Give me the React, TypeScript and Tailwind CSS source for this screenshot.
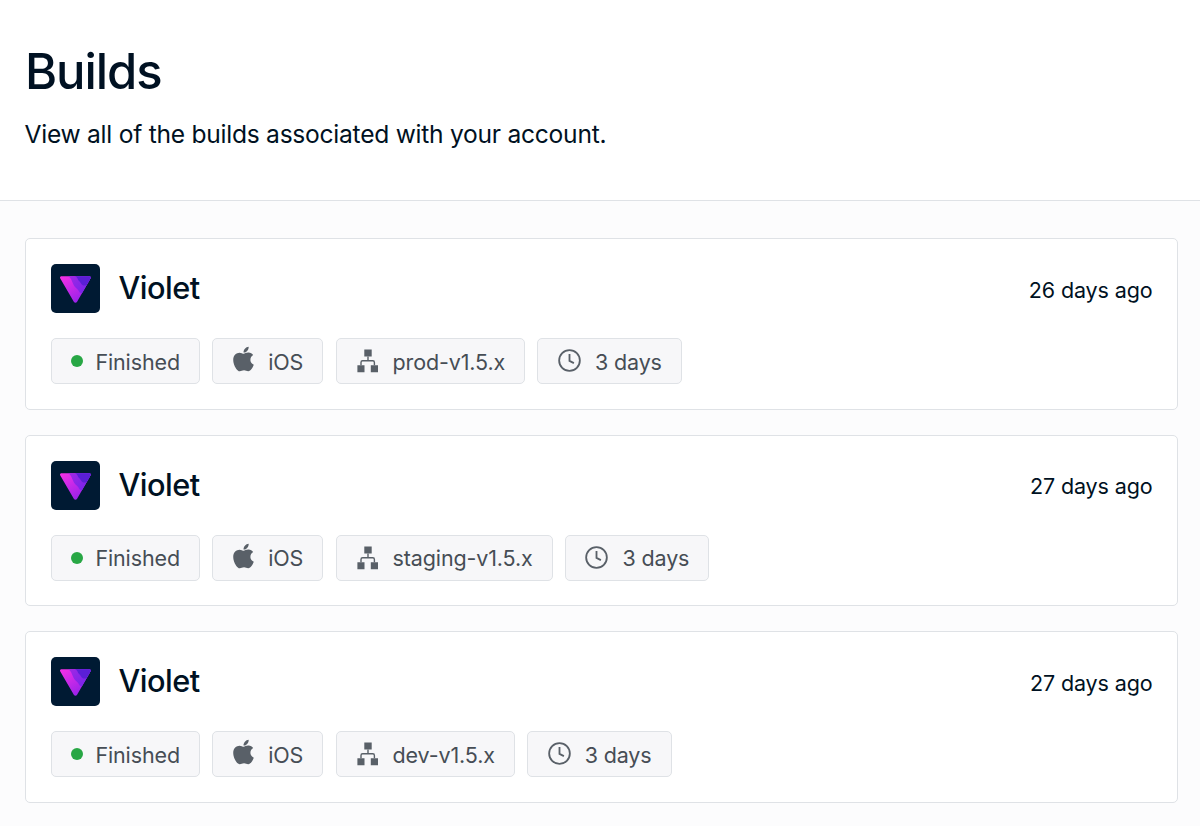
import type { ReactNode } from "react";
import { FaApple } from "react-icons/fa";

interface Build {
    id: number;
    name: string;
    age: string;
    channel: string;
    duration: string;
}

const builds: Build[] = [
    { id: 1, name: "Violet", age: "26 days ago", channel: "prod-v1.5.x", duration: "3 days" },
    { id: 2, name: "Violet", age: "27 days ago", channel: "staging-v1.5.x", duration: "3 days" },
    { id: 3, name: "Violet", age: "27 days ago", channel: "dev-v1.5.x", duration: "3 days" },
];

function AppLogo() {
    return (
        <svg className="h-[49px] w-[49px] shrink-0" viewBox="0 0 49 49" fill="none">
            <defs>
                <linearGradient id="violet-left" x1="11" y1="14" x2="26" y2="38" gradientUnits="userSpaceOnUse">
                    <stop stopColor="#f02fe6" />
                    <stop offset="1" stopColor="#9a22ea" />
                </linearGradient>
                <linearGradient id="violet-mid" x1="18" y1="12" x2="31" y2="29" gradientUnits="userSpaceOnUse">
                    <stop stopColor="#a028e4" />
                    <stop offset="1" stopColor="#7a24ea" />
                </linearGradient>
                <clipPath id="violet-shape">
                    <path d="M10.6 12.2H38.2C39.6 12.2 40.2 13.4 39.5 14.6L26.1 37.8C25.3 39.2 23.6 39.2 22.8 37.8L9.3 14.6C8.6 13.4 9.2 12.2 10.6 12.2Z" />
                </clipPath>
            </defs>
            <rect width="49" height="49" rx="5" fill="#001a33" />
            <g clipPath="url(#violet-shape)">
                <rect x="8" y="11" width="33" height="29" fill="url(#violet-left)" />
                <path d="M16 12C19.5 12.5 20.5 16 22 19.5C24 24.5 27 24.5 28 27.5C28.8 29 30 29.8 33 29L42 12Z" fill="url(#violet-mid)" />
                <path d="M24 12C26.5 13 26.5 15.5 28 17C30 18.5 30.5 22 34 21.5L38 21L42 12Z" fill="#5a1fd6" />
            </g>
        </svg>
    );
}

function ChannelIcon() {
    return (
        <svg className="h-6 w-[22px]" viewBox="0 0 22 24" fill="none">
            <path d="M7.3 0.4H14.7V7.6H7.3ZM0.4 16.2H7.5V23.2H0.4ZM13.8 16.2H21V23.2H13.8Z" fill="currentColor" />
            <path d="M11 7.5V11.6M4 16.2V13.4Q4 11.8 5.6 11.8H15.8Q17.4 11.8 17.4 13.4V16.2" stroke="currentColor" strokeWidth="1.4" />
        </svg>
    );
}

function ClockIcon() {
    return (
        <svg className="h-[23px] w-[23px]" viewBox="0 0 24 24" fill="none" stroke="currentColor" strokeWidth="1.9">
            <circle cx="12" cy="12" r="10.8" />
            <path d="M12 5.2V12.4L16.6 14.7" />
        </svg>
    );
}

function Tag({ icon, children }: { icon: ReactNode; children: ReactNode }) {
    return (
        <div className="flex h-[46px] items-center rounded-[5px] border border-[#dfe2e6] bg-[#f7f7f9] pr-[19px] pl-[19px] text-[#596068]">
            {icon}
            <span className="pt-px text-[21.5px] leading-7 tracking-[-0.13px] text-[#464d55]">{children}</span>
        </div>
    );
}

function BuildCard({ build }: { build: Build }) {
    return (
        <div className="h-[171.5px] rounded-[5px] border border-[#dfe2e6] bg-white px-[25px] pt-[25px]">
            <div className="flex h-[49px] items-center">
                <AppLogo />
                <h2 className="-mt-px ml-[18.5px] text-[30.7px] leading-[48px] font-medium tracking-[-0.5px]">{build.name}</h2>
                <span className="mt-0.5 -mr-[0.5px] ml-auto text-[21.5px] leading-7 tracking-[-0.12px]">{build.age}</span>
            </div>
            <div className="mt-[25px] flex gap-[12.3px]">
                <Tag icon={<span className="mr-[12.4px] h-3 w-3 rounded-full bg-[#28a745]" />}>Finished</Tag>
                <Tag icon={<FaApple className="mr-[14.5px] mb-1 ml-[0.5px] h-[28px] w-[21px]" />}>iOS</Tag>
                <Tag icon={<span className="mr-[14px] ml-px"><ChannelIcon /></span>}>{build.channel}</Tag>
                <Tag icon={<span className="mr-[14px] mb-px ml-[0.5px]"><ClockIcon /></span>}>{build.duration}</Tag>
            </div>
        </div>
    );
}

export default function App() {
    return (
        <div className="h-[826px] overflow-hidden bg-[#fcfcfd] font-['Inter',sans-serif] text-[#001122]">
            <header className="h-[201px] border-b border-[#dfe2e6] bg-white px-[25px] pt-[42px]">
                <h1 className="text-[49px] leading-[60px] font-medium tracking-[-1.1px]">Builds</h1>
                <p className="mt-[14px] -ml-[0.5px] text-[24.6px] leading-9 tracking-[-0.26px]">View all of the builds associated with your account.</p>
            </header>
            <main className="flex flex-col gap-[25px] pt-[37px] pr-[22px] pl-[25px]">
                {builds.map((build) => (
                    <BuildCard key={build.id} build={build} />
                ))}
            </main>
        </div>
    );
}
